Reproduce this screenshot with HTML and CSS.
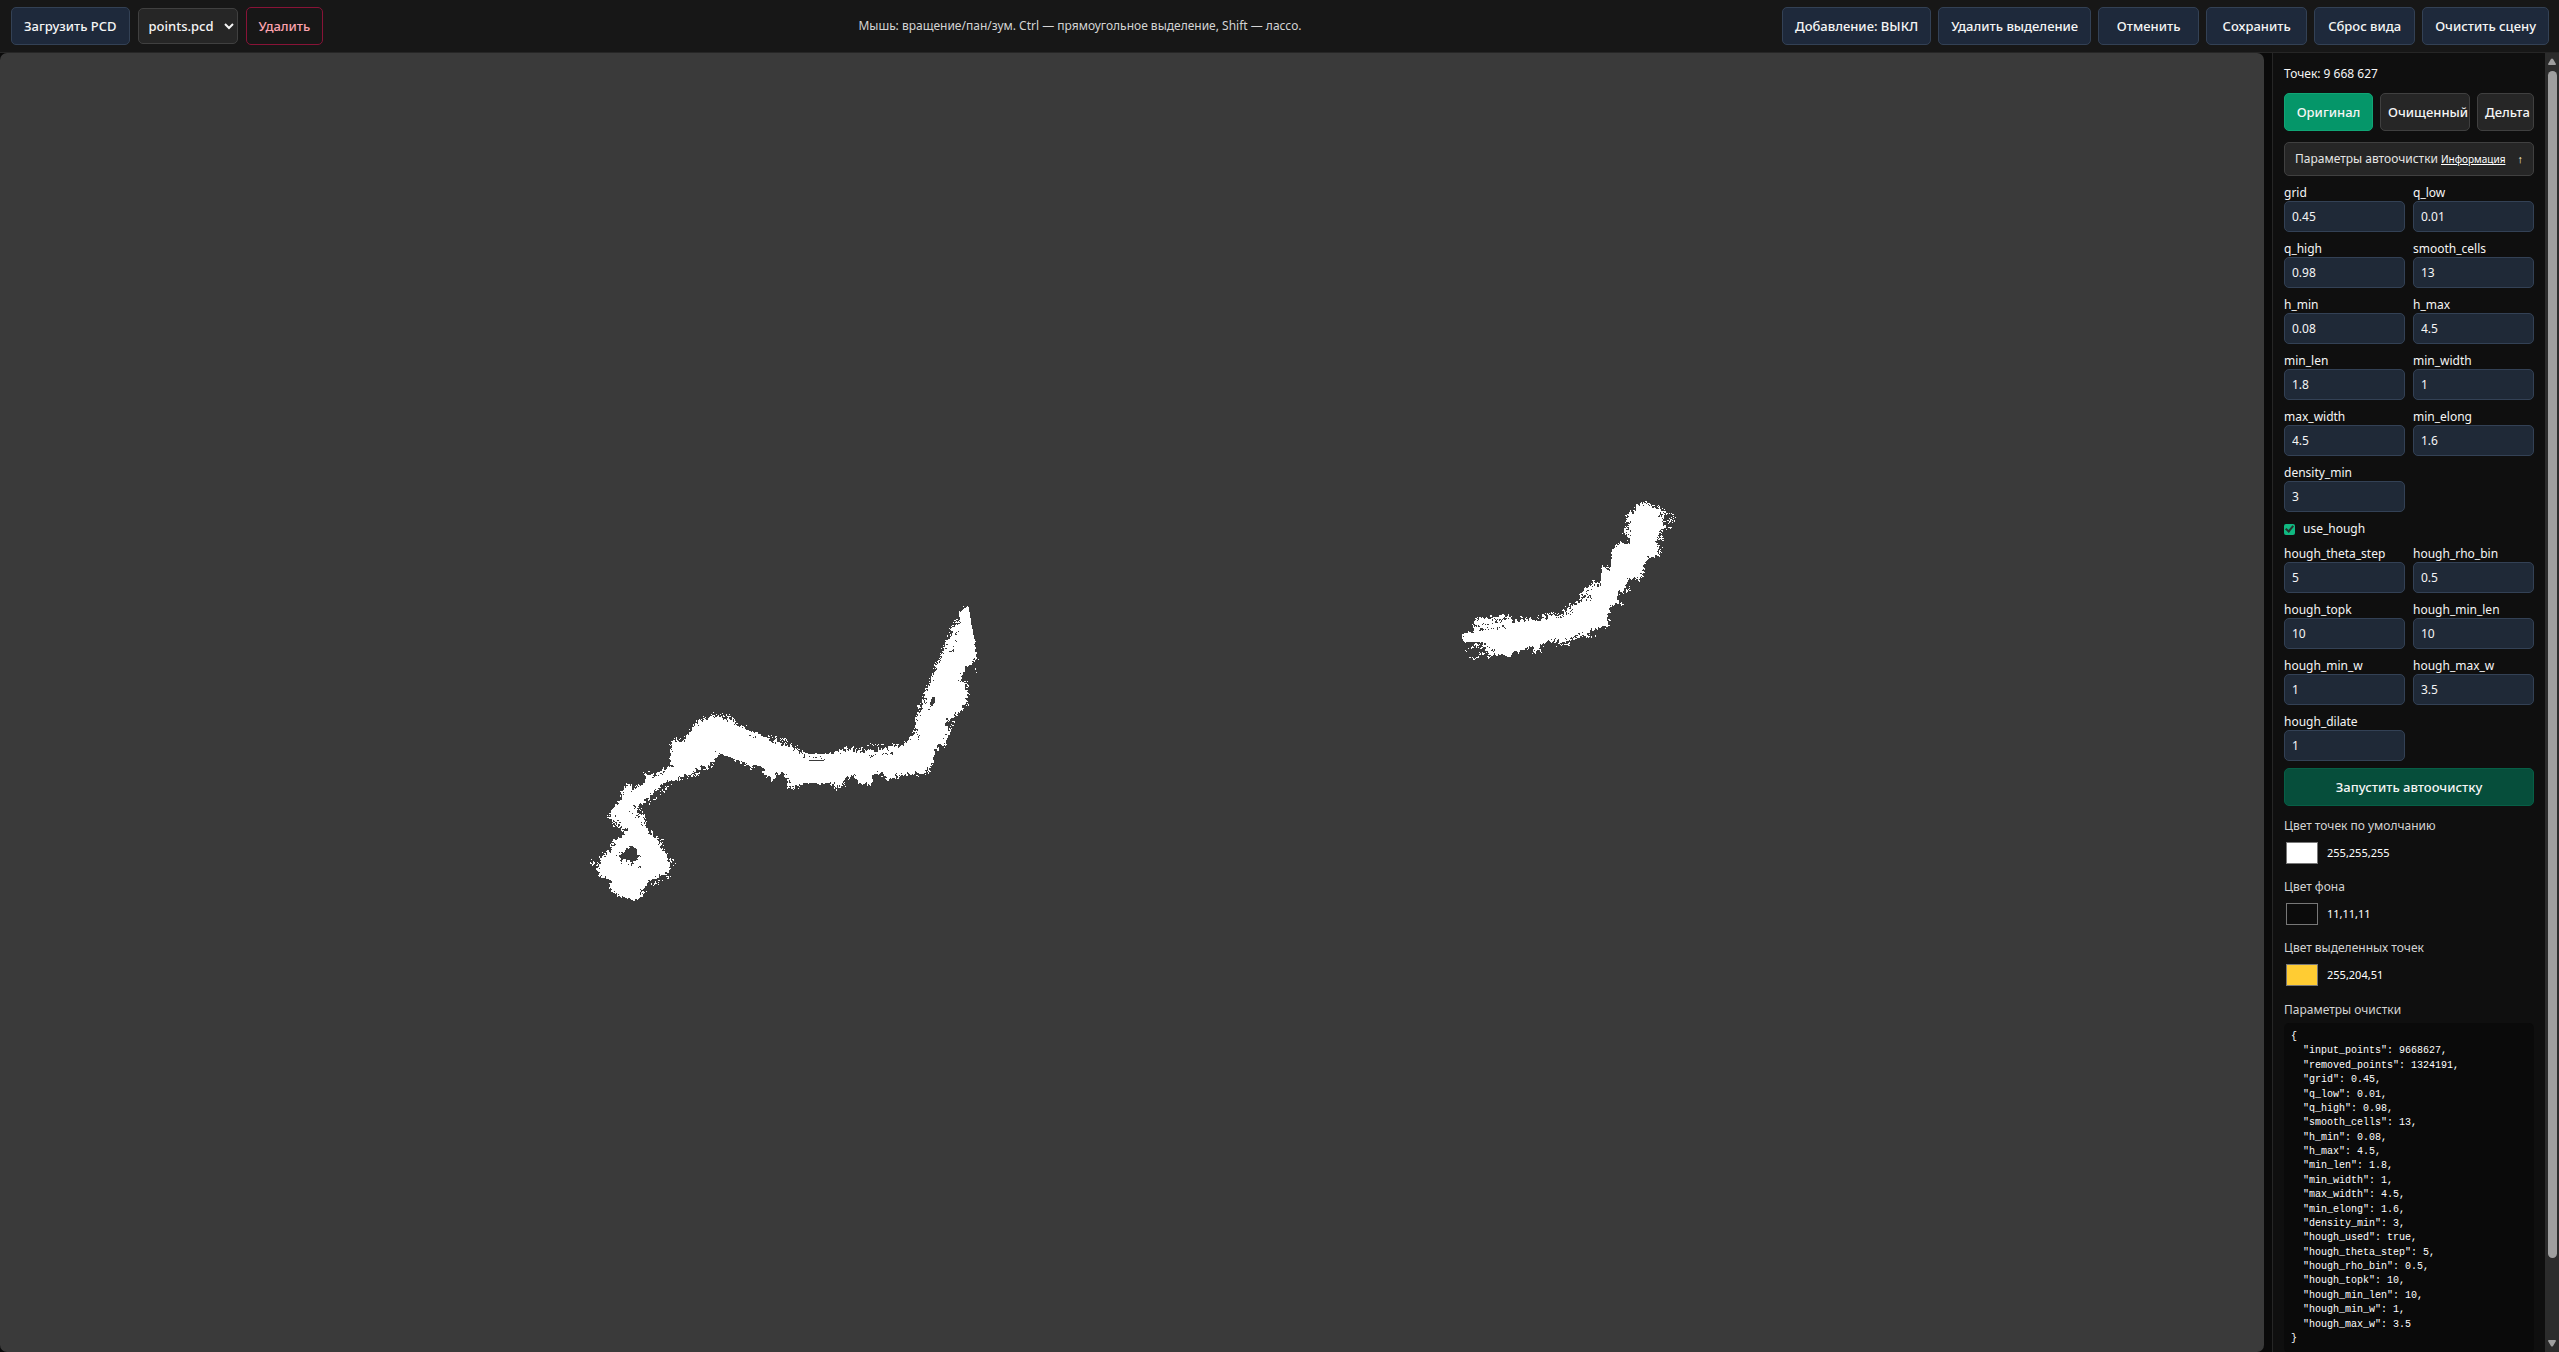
FILE: index.html
```html
<!DOCTYPE html>
<html lang="ru">
<head>
<meta charset="utf-8">
<title>Редактор облака точек</title>
<link rel="stylesheet" href="styles.css">
</head>
<body>
<header class="topbar">
  <div class="group files">
    <button class="btn">Загрузить PCD</button>
    <select class="file-select" aria-label="Файл"><option>points.pcd</option></select>
    <button class="btn btn-danger">Удалить</button>
  </div>
  <p class="hint">Мышь: вращение/пан/зум. Ctrl — прямоугольное выделение, Shift — лассо.</p>
  <div class="group">
    <button class="btn">Добавление: ВЫКЛ</button>
    <button class="btn">Удалить выделение</button>
    <button class="btn">Отменить</button>
    <button class="btn">Сохранить</button>
    <button class="btn">Сброс вида</button>
    <button class="btn">Очистить сцену</button>
  </div>
</header>
<div class="workspace">
  <main class="viewer">
    <svg class="cloud" viewBox="0 0 2264 1298" preserveAspectRatio="xMidYMid meet" role="img" aria-label="Облако точек">
      <defs>
        <filter id="rough" x="-5%" y="-5%" width="110%" height="110%">
          <feTurbulence type="fractalNoise" baseFrequency="0.12 0.09" numOctaves="3" seed="7" result="n"/>
          <feDisplacementMap in="SourceGraphic" in2="n" scale="32" xChannelSelector="R" yChannelSelector="G"/>
          <feComponentTransfer><feFuncA type="discrete" tableValues="0 1"/></feComponentTransfer>
        </filter>
        <filter id="specks" x="-5%" y="-10%" width="110%" height="120%">
          <feTurbulence type="fractalNoise" baseFrequency="0.15" numOctaves="2" seed="3" result="n"/>
          <feDisplacementMap in="SourceGraphic" in2="n" scale="24" xChannelSelector="R" yChannelSelector="G"/>
        </filter>
      </defs>
      <g fill="#fff" transform="translate(570 537) scale(.33333)">
        <path filter="url(#rough)" fill-rule="evenodd" d="M1180 56L1196 54 1198 90 1208 130 1214 180 1217 208 1205 212 1200 226 1186 234 1178 250 1170 272 1188 276 1192 300 1188 340 1178 350 1160 372 1146 388 1128 388 1124 404 1142 412 1130 440 1124 464 1108 464 1096 480 1090 515 1080 522 1070 543 1050 548 1000 556 965 562 950 570 940 550 908 550 904 582 868 582 856 556 828 560 824 574 812 586 800 592 788 578 700 575 690 588 658 588 654 562 640 546 622 550 612 568 582 552 576 520 560 514 545 532 530 520 460 490 442 488 436 510 410 528 380 536 370 552 340 556 325 570 290 572 262 600 235 625 210 643 198 660 222 680 228 710 250 740 270 752 276 775 296 800 304 828 294 846 270 856 240 874 212 900 212 920 190 930 150 918 114 893 125 878 106 858 92 862 82 830 95 802 125 777 132 747 150 742 172 716 155 716 132 693 118 675 127 655 152 625 158 600 175 580 186 586 186 598 230 572 224 554 235 546 250 554 302 526 304 462 314 452 345 450 362 422 387 392 430 374 475 386 500 404 580 438 610 448 650 464 690 486 740 494 810 488 830 478 880 482 920 478 1000 463 1025 442 1038 412 1042 375 1062 328 1072 292 1087 264 1100 228 1115 188 1140 134 1155 96 1164 110 1168 70ZM186 766L168 778 146 796 154 808 174 804 182 818 196 812 206 796 200 776Z"/>
        <path d="M1172 62L1196 48 1204 100 1212 150 1218 200 1180 225 1160 200 1170 120ZM450 385L498 404 560 430 600 460 690 490 740 492 810 488 780 577 690 577 640 545 530 517 445 487ZM230 574L302 528 330 540 240 600 200 620 190 600ZM128 878L190 932 212 915 205 880Z"/>
        <g filter="url(#specks)" fill="none" stroke="#fff" stroke-width="4">
          <path stroke-dasharray="5 6 10 4" d="M300 465L312 448 346 446 382 388 432 370 482 378 500 400M580 434L610 440 650 450 690 478M812 482L830 470 870 476 900 464 920 462 990 462M1040 385L1060 315 1080 265 1100 220 1120 176 1140 120 1158 85M1200 215L1215 215M1186 270L1196 310 1192 340 1160 372 1150 400 1136 420 1130 450 1120 475M1090 520L1075 545 1035 556M800 598L826 580M652 592L690 594M66 805L68 828M74 815L84 840M310 808L318 820M246 735L276 745 285 780M240 640L285 594 310 588M200 640L226 680 230 700M1210 235L1220 246M215 910L250 885 300 855M118 670L128 700 160 720M340 565L380 555 430 520M130 738L150 745M100 790L122 776"/>
        </g>
        <g filter="url(#specks)" fill="none" stroke="#3a3a3a" stroke-width="3">
          <path stroke-dasharray="12 5 4 8" d="M1168 90L1158 135M1160 150L1142 195M1144 130L1118 190M1092 322L1072 372M1068 325L1045 380M700 498L780 502M600 450L660 470M900 495L975 485M1038 425L1046 450M975 554L1050 548M245 562L300 538M275 585L230 630M190 640L215 705M180 660L205 690M132 670L155 705M222 888L270 860M208 830L238 822M170 820L190 828M1106 200L1096 250M270 750L266 775M540 434L572 442"/>
        </g>
        <path fill="#3a3a3a" d="M718 510H762V513H718ZM1086 322L1094 318 1094 338 1084 346 1080 340ZM172 780L186 766 194 776 200 790 196 812 186 812 176 800 158 808 146 796 160 788Z"/>
      </g>
      <g fill="#fff" transform="translate(1440 427) scale(.33333)">
        <path filter="url(#rough)" d="M592 76L612 68 640 76 660 86 666 98 676 102 670 120 676 140 662 156 654 180 658 200 654 228 618 232 608 260 608 290 592 296 574 288 556 312 562 330 540 336 528 352 544 372 520 370 502 400 506 436 490 444 470 440 440 462 390 478 360 488 340 478 300 492 302 512 284 510 276 496 238 512 200 528 170 522 150 530 136 508 130 484 70 482 74 460 104 454 104 420 130 412 210 410 220 428 260 416 300 418 330 404 366 406 376 388 404 370 424 364 424 340 440 322 456 318 460 302 484 318 486 256 500 268 514 270 518 206 534 192 568 190 570 176 556 156 566 140 562 104 582 92Z"/>
        <path d="M76 458L130 456 204 450 300 430 420 395 480 350 486 256 510 272 518 206 580 195 580 110 640 90 650 150 640 220 600 260 560 290 500 395 500 435 460 440 400 460 280 490 200 510 150 484 68 483Z"/>
        <g filter="url(#specks)" fill="none" stroke="#fff" stroke-width="5">
          <path stroke-dasharray="7 6 12 4" d="M580 90L595 72 620 68M640 74L670 88 664 96 696 104 704 118 686 122 690 146M664 150L668 200 655 225M560 100L560 140 552 160M104 446L108 414 150 420 190 406 216 412M225 424L262 410M290 412L340 396 362 406M368 386L410 366M425 355L434 325 460 318 462 300M78 512L110 490 130 510M84 530L112 534 118 516 150 526M280 496L282 516M292 495L304 514M345 482L360 494 390 490M400 474L440 464 470 466M550 318L570 330M530 362L548 374M575 290L606 296M486 256L512 266M516 205L545 190"/>
        </g>
        <g filter="url(#specks)" fill="none" stroke="#3a3a3a" stroke-width="4">
          <path stroke-dasharray="10 5 5 7" d="M118 446L206 440M110 432L190 424M150 416L200 418M618 232L652 230M656 100L680 130M662 150L652 190M568 130L566 160M440 330L452 360M430 345L444 365M380 400L400 385M134 490L170 520M120 494L140 520M400 468L460 452M350 412L380 402"/>
        </g>
      </g>
    </svg>
  </main>
  <aside class="sidebar">
    <div class="panel">
      <p class="count">Точек: 9 668 627</p>
      <div class="tabs">
        <button class="btn tab active">Оригинал</button>
        <button class="btn tab">Очищенный</button>
        <button class="btn tab">Дельта</button>
      </div>
      <div class="section-head">
        <span>Параметры автоочистки</span>
        <a class="info" href="#info">Информация</a>
        <span class="arrow">↑</span>
      </div>
      <form class="params">
        <label>grid<input value="0.45"></label>
        <label>q_low<input value="0.01"></label>
        <label>q_high<input value="0.98"></label>
        <label>smooth_cells<input value="13"></label>
        <label>h_min<input value="0.08"></label>
        <label>h_max<input value="4.5"></label>
        <label>min_len<input value="1.8"></label>
        <label>min_width<input value="1"></label>
        <label>max_width<input value="4.5"></label>
        <label>min_elong<input value="1.6"></label>
        <label>density_min<input value="3"></label>
        <label class="check"><input type="checkbox" checked>use_hough</label>
        <label>hough_theta_step<input value="5"></label>
        <label>hough_rho_bin<input value="0.5"></label>
        <label>hough_topk<input value="10"></label>
        <label>hough_min_len<input value="10"></label>
        <label>hough_min_w<input value="1"></label>
        <label>hough_max_w<input value="3.5"></label>
        <label>hough_dilate<input value="1"></label>
      </form>
      <button class="btn run">Запустить автоочистку</button>
      <div class="color-field">
        <label for="c-points">Цвет точек по умолчанию</label>
        <div class="color-row"><input type="color" id="c-points" value="#ffffff"><span>255,255,255</span></div>
      </div>
      <div class="color-field">
        <label for="c-bg">Цвет фона</label>
        <div class="color-row"><input type="color" id="c-bg" value="#0b0b0b"><span>11,11,11</span></div>
      </div>
      <div class="color-field">
        <label for="c-sel">Цвет выделенных точек</label>
        <div class="color-row"><input type="color" id="c-sel" value="#ffcc33"><span>255,204,51</span></div>
      </div>
      <h2 class="result-title">Параметры очистки</h2>
      <pre class="result"><code>{</code><code>  "input_points": 9668627,</code><code>  "removed_points": 1324191,</code><code>  "grid": 0.45,</code><code>  "q_low": 0.01,</code><code>  "q_high": 0.98,</code><code>  "smooth_cells": 13,</code><code>  "h_min": 0.08,</code><code>  "h_max": 4.5,</code><code>  "min_len": 1.8,</code><code>  "min_width": 1,</code><code>  "max_width": 4.5,</code><code>  "min_elong": 1.6,</code><code>  "density_min": 3,</code><code>  "hough_used": true,</code><code>  "hough_theta_step": 5,</code><code>  "hough_rho_bin": 0.5,</code><code>  "hough_topk": 10,</code><code>  "hough_min_len": 10,</code><code>  "hough_min_w": 1,</code><code>  "hough_max_w": 3.5</code><code>}</code></pre>
    </div>
    <div class="scrollbar" aria-hidden="true">
      <svg width="10" height="8" viewBox="0 0 10 8"><path d="M4 1Q5 0 6 1L9 6Q9 7 8 7H2Q1 7 1 6Z" fill="#9f9f9f"/></svg>
      <div class="track"><div class="thumb"></div></div>
      <svg width="10" height="8" viewBox="0 0 10 8"><path d="M4 7Q5 8 6 7L9 2Q9 1 8 1H2Q1 1 1 2Z" fill="#9f9f9f"/></svg>
    </div>
  </aside>
</div>
</body>
</html>
```
FILE: styles.css
```css
* { box-sizing: border-box; }

body {
  margin: 0;
  height: 100vh;
  display: flex;
  flex-direction: column;
  overflow: hidden;
  background: #0a0a0a;
  color: #f5f5f5;
  font: 12px/16px "Noto Sans", "Open Sans", sans-serif;
}

button, input, select { font: inherit; color: inherit; margin: 0; }
p, h2, pre { margin: 0; }

.topbar {
  display: flex;
  align-items: center;
  flex: none;
  height: 53px;
  padding: 0 10px 0 11px;
  background: #171717;
  border-bottom: 1px solid #262626;
}
.group { display: flex; align-items: center; gap: 7px; }
.files { min-width: 367px; gap: 8px; }
.hint { flex: 1; text-align: center; color: #d4d4d4; }

.btn {
  height: 38px;
  min-width: 101px;
  padding: 0 12px;
  border: 1px solid #334155;
  border-radius: 5px;
  background: #1e293b;
  color: #f5f5f5;
  font-size: 13px;
  font-weight: 500;
  white-space: nowrap;
}
.btn-danger { min-width: 0; background: transparent; border-color: #881337; color: #fda4af; }

.file-select {
  height: 36px;
  padding: 0 6px;
  border: 1px solid #404040;
  border-radius: 5px;
  background: #262626;
  font-size: 13px;
  font-weight: 500;
}

.workspace { flex: 1; display: flex; gap: 8px; min-height: 0; }
.viewer {
  flex: 1;
  min-width: 0;
  background: #3a3a3a;
  border-radius: 7px;
  overflow: hidden;
}
.cloud { display: block; width: 100%; height: 100%; shape-rendering: crispEdges; }

.sidebar {
  flex: none;
  width: 287px;
  display: flex;
  border-left: 1px solid #262626;
  background: #0f0f0f;
}
.panel { flex: 1; min-width: 0; padding: 13px 11px; overflow: hidden; }
.count { line-height: 16px; }

.tabs { display: grid; grid-template-columns: 89px 90px 1fr; gap: 7px; margin-top: 11px; }
.tab { min-width: 0; padding: 0 7px; background: #262626; border-color: #404040; overflow: hidden; }
.tab.active { background: #059669; border-color: #10a575; }

.section-head {
  display: flex;
  align-items: center;
  height: 34px;
  margin-top: 11px;
  padding: 0 10px;
  border: 1px solid #404040;
  border-radius: 5px;
  background: #262626;
  color: #e5e5e5;
}
.info { margin-left: 3px; color: #fff; font-size: 10px; }
.arrow { margin-left: auto; font-size: 11px; font-weight: 700; color: #fef3c7; }

.params { display: grid; grid-template-columns: 1fr 1fr; gap: 9px 8px; margin-top: 9px; }
.params label { display: block; }
.params input:not([type]) {
  display: block;
  width: 100%;
  height: 31px;
  padding: 0 7px;
  border: 1px solid #334155;
  border-radius: 5px;
  background: #1f2937;
}
.params .check { grid-column: 1 / -1; display: flex; align-items: center; gap: 8px; }
.check input {
  appearance: none;
  width: 11px;
  height: 11px;
  border-radius: 2px;
  background: #10b981;
  display: grid;
  place-items: center;
}
.check input::after {
  content: "";
  width: 3px;
  height: 6px;
  margin-bottom: 2px;
  border: solid #26332e;
  border-width: 0 2px 2px 0;
  transform: rotate(40deg);
}

.run { width: 100%; margin-top: 7px; background: #064e3b; border-color: #065f46; }

.color-field { margin-top: 13px; color: #d4d4d4; }
.color-row { display: flex; align-items: center; gap: 7px; margin-top: 6px; color: #fff; font-size: 11px; }
.color-row input {
  width: 36px;
  height: 26px;
  padding: 0 2px;
  border: 0;
  background: none;
}
.color-row input::-webkit-color-swatch-wrapper { padding: 2px 0; }
.color-row input::-webkit-color-swatch { border: 1px solid #777; }
.run + .color-field { margin-top: 12px; }

.result-title { margin-top: 14px; font-size: 12px; line-height: 16px; font-weight: 400; color: #d4d4d4; }
.result {
  display: flex;
  flex-direction: column;
  justify-content: space-between;
  height: 330px;
  margin-top: 5px;
  padding: 7px;
  border-radius: 5px;
  background: #0a0a0a;
  color: #fff;
}
.result code { font: 10px/14px "Liberation Mono", monospace; }

.scrollbar {
  flex: none;
  width: 14px;
  display: flex;
  flex-direction: column;
  align-items: center;
  gap: 5px;
  padding: 5px 0;
  background: #2c2c2c;
}
.scrollbar svg { flex: none; }
.track { flex: 1; width: 9px; }
.thumb { height: 94%; border-radius: 5px; background: #9f9f9f; }
```
